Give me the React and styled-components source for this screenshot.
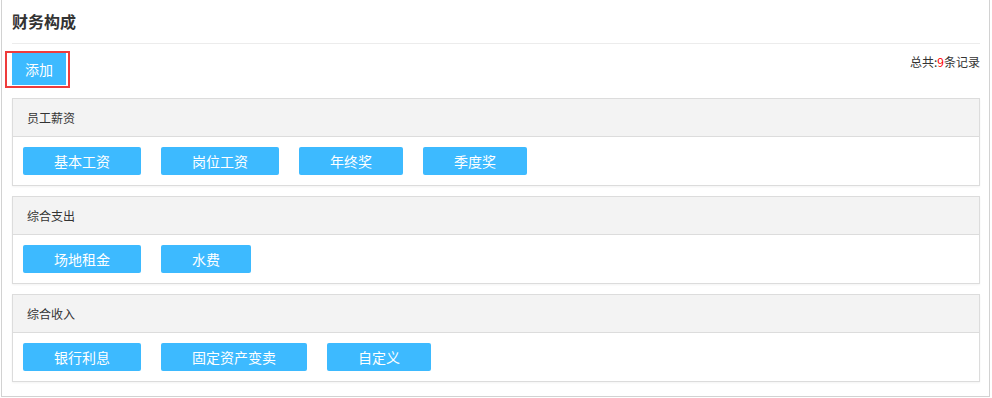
import React from 'react';
import styled, { createGlobalStyle } from 'styled-components';

const groups = [
  { name: '员工薪资', items: ['基本工资', '岗位工资', '年终奖', '季度奖'] },
  { name: '综合支出', items: ['场地租金', '水费'] },
  { name: '综合收入', items: ['银行利息', '固定资产变卖', '自定义'] },
];

const total = groups.reduce((n, g) => n + g.items.length, 0);

const App = () => {
  return (
    <>
      <GlobalStyle />
      <Page>
        <Title>财务构成</Title>
        <Toolbar>
          <Highlight>
            <AddButton>添加</AddButton>
          </Highlight>
          <Summary>
            总共:<Count>{total}</Count>条记录
          </Summary>
        </Toolbar>
        {groups.map((g) => (
          <Panel key={g.name}>
            <PanelHeader>{g.name}</PanelHeader>
            <PanelBody>
              {g.items.map((item) => (
                <Tag key={item}>{item}</Tag>
              ))}
            </PanelBody>
          </Panel>
        ))}
      </Page>
    </>
  );
};

const GlobalStyle = createGlobalStyle`
  html, body {
    margin: 0;
    padding: 0;
    background: #fff;
  }
  body {
    font-family: "Noto Sans CJK SC", "Liberation Sans", sans-serif;
    color: #333;
  }
  * {
    box-sizing: border-box;
  }
`;

const Page = styled.div`
  margin: 0 2px 0 1px;
  height: 397px;
  border: 1px solid #d2d2d2;
  border-top: none;
  padding: 0 9px 0 10px;
`;

const Title = styled.h2`
  margin: 0;
  height: 44px;
  display: flex;
  align-items: center;
  padding-bottom: 1px;
  border-bottom: 1px solid #ececec;
  font-size: 16px;
  font-weight: bold;
  color: #333;
  line-height: 1;
`;

const Toolbar = styled.div`
  display: flex;
  justify-content: space-between;
  align-items: flex-start;
  height: 54px;
  padding-top: 7px;
`;

const Highlight = styled.span`
  display: inline-flex;
  margin-left: -7px;
  border: 2px solid #ee3b3b;
  padding: 0 2px 1px 5px;
`;

const AddButton = styled.button`
  height: 32px;
  width: 54px;
  border: none;
  border-radius: 0;
  background: #3dbaff;
  color: #fff;
  font-family: inherit;
  font-size: 14px;
  line-height: 32px;
  padding: 0;
  cursor: pointer;
`;

const Summary = styled.div`
  font-size: 12px;
  line-height: 12px;
  margin-top: 5px;
  color: #333;
`;

const Count = styled.span`
  color: #ff0000;
`;

const Panel = styled.div`
  border: 1px solid #dcdcdc;
  margin-bottom: 10px;
  box-shadow: 0 1px 2px rgba(0, 0, 0, 0.05);
`;

const PanelHeader = styled.div`
  height: 38px;
  display: flex;
  align-items: center;
  padding-left: 14px;
  background: #f3f3f3;
  border-bottom: 1px solid #dcdcdc;
  font-size: 12px;
  color: #333;
`;

const PanelBody = styled.div`
  display: flex;
  gap: 20px;
  padding: 10px;
`;

const Tag = styled.button`
  height: 28px;
  padding: 0 31px;
  border: none;
  border-radius: 2px;
  background: #3dbaff;
  color: #fff;
  font-family: inherit;
  font-size: 14px;
  line-height: 28px;
  cursor: pointer;
`;

export default App;
